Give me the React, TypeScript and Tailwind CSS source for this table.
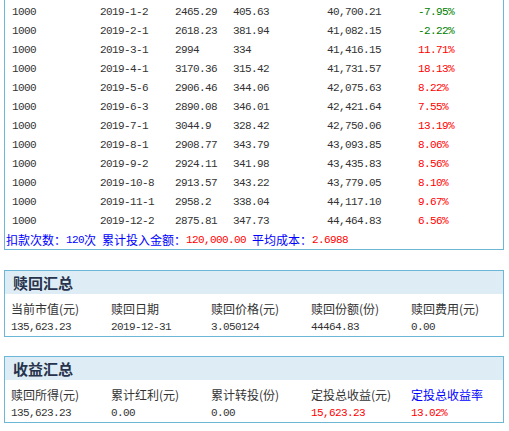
const rows: [string, string, string, string, string, string][] = [
  ["1000", "2019-1-2", "2465.29", "405.63", "40,700.21", "-7.95%"],
  ["1000", "2019-2-1", "2618.23", "381.94", "41,082.15", "-2.22%"],
  ["1000", "2019-3-1", "2994", "334", "41,416.15", "11.71%"],
  ["1000", "2019-4-1", "3170.36", "315.42", "41,731.57", "18.13%"],
  ["1000", "2019-5-6", "2906.46", "344.06", "42,075.63", "8.22%"],
  ["1000", "2019-6-3", "2890.08", "346.01", "42,421.64", "7.55%"],
  ["1000", "2019-7-1", "3044.9", "328.42", "42,750.06", "13.19%"],
  ["1000", "2019-8-1", "2908.77", "343.79", "43,093.85", "8.06%"],
  ["1000", "2019-9-2", "2924.11", "341.98", "43,435.83", "8.56%"],
  ["1000", "2019-10-8", "2913.57", "343.22", "43,779.05", "8.10%"],
  ["1000", "2019-11-1", "2958.2", "338.04", "44,117.10", "9.67%"],
  ["1000", "2019-12-2", "2875.81", "347.73", "44,464.83", "6.56%"],
];

const mono = "font-['Liberation_Mono',monospace] text-[11px] tracking-[-0.6px]";
const cjk = "font-['Noto_Sans_CJK_SC',sans-serif] text-[12px]";

type Cell = { label: string; value: string; labelClass?: string; valueClass?: string };

function SummaryBox({ title, cells, className }: { title: string; cells: Cell[]; className?: string }) {
  return (
    <div className={`ml-[4px] w-[500px] border border-[#6cb6d8] ${className ?? ""}`}>
      <div className="h-[23px] bg-[#deedf5] pl-[8px] flex items-center">
        <span className="font-['Noto_Sans_CJK_SC',sans-serif] text-[15px] font-bold text-[#27324c] leading-none">{title}</span>
      </div>
      <div className="mt-[5px] pl-[6px] grid grid-cols-[100px_100px_100px_100px_100px]">
        {cells.map((c) => (
          <div key={c.label} className={`h-[19px] flex items-center leading-none ${cjk} ${c.labelClass ?? "text-[#333]"}`}>
            {c.label}
          </div>
        ))}
        {cells.map((c) => (
          <div key={c.label + "v"} className={`h-[18px] flex items-center leading-none ${mono} ${c.valueClass ?? "text-[#333]"}`}>
            {c.value}
          </div>
        ))}
      </div>
    </div>
  );
}

export default function App() {
  return (
    <div className="w-[509px] h-[431px] bg-white overflow-hidden">
      {/* 定投明细 */}
      <div className="ml-[4px] w-[500px] border-x border-b border-[#6cb6d8] pt-[3px]">
        {rows.map((r) => {
          const neg = r[5].startsWith("-");
          return (
            <div
              key={r[1]}
              className={`h-[19px] pl-[7px] grid grid-cols-[88px_75px_58px_94px_91px_1fr] items-center leading-none text-[#333] ${mono}`}
            >
              <span>{r[0]}</span>
              <span>{r[1]}</span>
              <span>{r[2]}</span>
              <span>{r[3]}</span>
              <span>{r[4]}</span>
              <span className={neg ? "text-[#008000]" : "text-[#ff0000]"}>{r[5]}</span>
            </div>
          );
        })}
        <div className={`h-[18px] pl-[1px] flex items-center leading-none text-[#0000ff] whitespace-nowrap ${cjk}`}>
          扣款次数：<span className={mono}>120</span>次
          <span className="ml-[6px]">累计投入金额：</span>
          <span className={`text-[#ff0000] ${mono}`}>120,000.00</span>
          <span className="ml-[6px]">平均成本：</span>
          <span className={`text-[#ff0000] ${mono}`}>2.6988</span>
        </div>
      </div>

      <SummaryBox
        className="mt-[20px]"
        title="赎回汇总"
        cells={[
          { label: "当前市值(元)", value: "135,623.23" },
          { label: "赎回日期", value: "2019-12-31" },
          { label: "赎回价格(元)", value: "3.050124" },
          { label: "赎回份额(份)", value: "44464.83" },
          { label: "赎回费用(元)", value: "0.00" },
        ]}
      />

      <SummaryBox
        className="mt-[19px]"
        title="收益汇总"
        cells={[
          { label: "赎回所得(元)", value: "135,623.23" },
          { label: "累计红利(元)", value: "0.00" },
          { label: "累计转投(份)", value: "0.00" },
          { label: "定投总收益(元)", value: "15,623.23", valueClass: "text-[#ff0000]" },
          { label: "定投总收益率", value: "13.02%", labelClass: "text-[#0000ff]", valueClass: "text-[#ff0000]" },
        ]}
      />
    </div>
  );
}
